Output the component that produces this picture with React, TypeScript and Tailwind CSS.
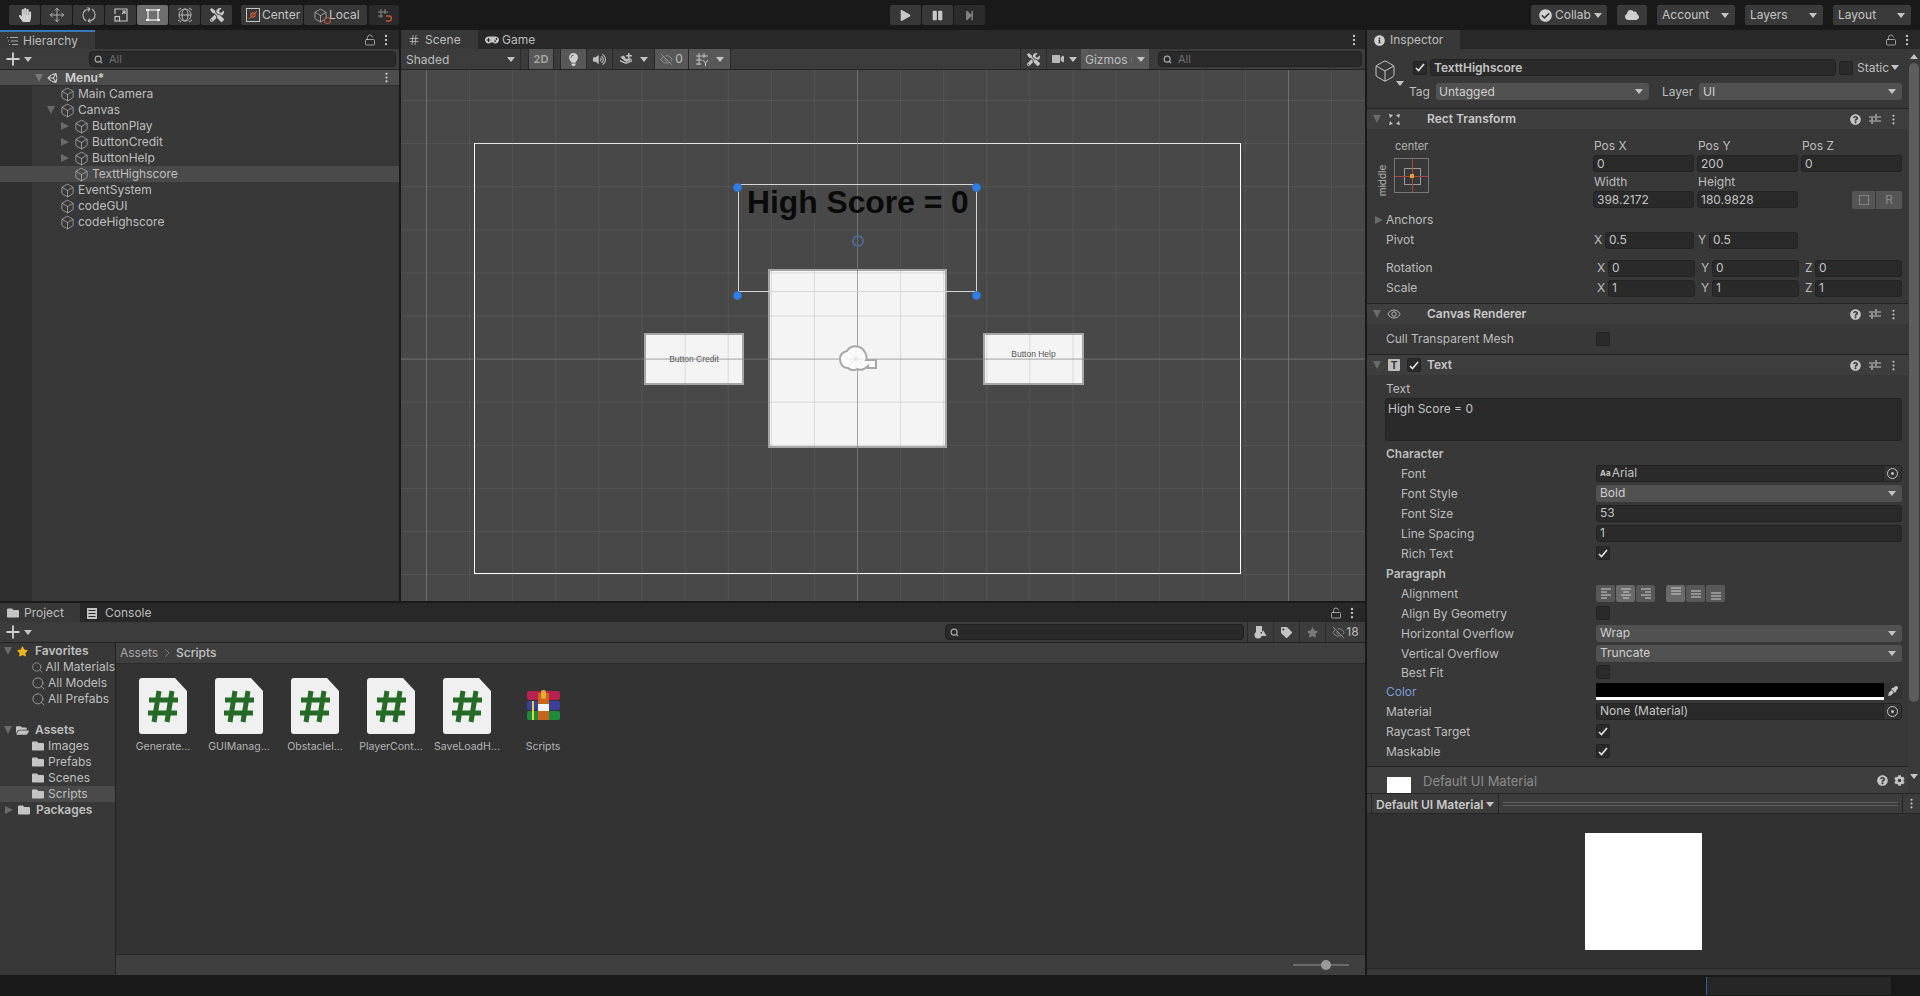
import type { ReactNode } from "react";
import { Box, EyeOff, Hash, LockOpen, Move, Search, EllipsisVertical, Plus } from "lucide-react";
import {
  FaCheckCircle,
  FaCloud,
  FaCog,
  FaEyeDropper,
  FaFolder,
  FaFolderOpen,
  FaGamepad,
  FaHandPaper,
  FaInfoCircle,
  FaLightbulb,
  FaPause,
  FaPlay,
  FaQuestionCircle,
  FaStar,
  FaStepForward,
  FaTag,
  FaTools,
  FaUnity,
  FaVideo,
  FaVolumeUp,
} from "react-icons/fa";

const Caret = ({ className = "" }: { className?: string }) => (
  <span className={`inline-block h-0 w-0 border-x-[4px] border-t-[5px] border-x-transparent border-t-[#c4c4c4] ${className}`} />
);

const FoldDown = ({ className = "" }: { className?: string }) => (
  <span className={`inline-block h-0 w-0 border-x-[4px] border-t-[8px] border-x-transparent border-t-[#6a6a6a] ${className}`} />
);

const FoldRight = ({ className = "" }: { className?: string }) => (
  <span className={`inline-block h-0 w-0 border-y-[4px] border-l-[8px] border-y-transparent border-l-[#6a6a6a] ${className}`} />
);

const Sliders = () => (
  <svg width="12" height="12" viewBox="0 0 12 12" stroke="#c4c4c4" strokeWidth="1.2" fill="none">
    <path d="M0 4h6M8 4h4M7 1v6M0 8h2M4 8h8M3 5v6" />
  </svg>
);

const ToolButton = ({ children, active, className = "" }: { children: ReactNode; active?: boolean; className?: string }) => (
  <div className={`flex h-5 w-[31px] items-center justify-center rounded-[2px] ${active ? "bg-[#6e6e6e]" : "bg-[#383838]"} ${className}`}>
    {children}
  </div>
);

const TopDropdown = ({ label, width }: { label: string; width: string }) => (
  <div className={`flex h-5 items-center justify-between rounded-[2px] bg-[#3a3a3a] pl-[5px] pr-[6px] text-[#c4c4c4] ${width}`}>
    <span>{label}</span>
    <Caret />
  </div>
);

const TopBar = () => (
  <div className="flex h-[30px] items-center bg-[#191919] text-[12px]">
    <div className="flex w-[890px] items-center pl-[9px]">
      <div className="flex gap-px">
        <ToolButton><FaHandPaper size={14} color="#d0d0d0" /></ToolButton>
        <ToolButton><Move size={16} color="#b8b8b8" strokeWidth={1.4} /></ToolButton>
        <ToolButton>
          <svg width="16" height="16" viewBox="0 0 16 16" fill="none" stroke="#b8b8b8" strokeWidth="1.1">
            <path d="M5 14C1 11 1 6 4 3.5 5.5 2.3 7 2 9 2M9 2L6.5.5M9 2L7 4.5" />
            <path d="M11 2c4 3 4 8 1 10.500C10.500 13.700 9 14 7 14M7 14l2.500 1.500M7 14l2-2.500" />
          </svg>
        </ToolButton>
        <ToolButton>
          <svg width="14" height="14" viewBox="0 0 14 14" fill="none" stroke="#c4c4c4" strokeWidth="1.2">
            <path d="M1 6V1h12v12H6M8 6l3-3M8 3h3v3" />
            <rect x="1" y="8.5" width="4.5" height="4.5" />
          </svg>
        </ToolButton>
        <ToolButton active>
          <svg width="14" height="14" viewBox="0 0 14 14" fill="none" stroke="#f0f0f0" strokeWidth="1.2">
            <rect x="2" y="2" width="10" height="10" />
            <path d="M0 2h3M11 2h3M0 12h3M11 12h3" strokeWidth="2" />
          </svg>
        </ToolButton>
        <ToolButton>
          <svg width="16" height="16" viewBox="0 0 16 16" fill="none" stroke="#b8b8b8" strokeWidth="1">
            <circle cx="8" cy="8" r="6" />
            <ellipse cx="8" cy="8" rx="3" ry="6" />
            <path d="M2 8h12M1 3l3-2M12 1l3 2M1 13l3 2M12 15l3-2" />
          </svg>
        </ToolButton>
        <ToolButton><FaTools size={14} color="#c8c8c8" /></ToolButton>
      </div>
      <div className="ml-[9px] flex h-5 w-[62px] items-center gap-[2px] rounded-[2px] bg-[#383838] pl-[5px] text-[#c4c4c4]">
        <svg width="14" height="14" viewBox="0 0 14 14" fill="none">
          <rect x="0.5" y="0.5" width="13" height="13" stroke="#c4c4c4" />
          <circle cx="7" cy="7" r="2.2" stroke="#d8593c" strokeWidth="1.2" />
          <path d="M3 11l8-8" stroke="#d8593c" />
        </svg>
        <span>Center</span>
      </div>
      <div className="ml-px flex h-5 w-[63px] items-center rounded-[2px] bg-[#383838] pl-[9px] text-[#c4c4c4]">
        <span className="relative">
          <Box size={15} color="#b8b8b8" strokeWidth={1.2} />
          <span className="absolute bottom-[-1px] right-[-3px] size-[7px] rounded-full border border-[#d8593c]" />
        </span>
        <span className="ml-[1px]">Local</span>
      </div>
      <div className="ml-[2px] flex h-5 w-[30px] items-center justify-center rounded-[2px] bg-[#2b2b2b]">
        <svg width="15" height="15" viewBox="0 0 15 15" fill="none" stroke="#8a8a8a" strokeWidth="1">
          <path d="M4 1v9M8 1v5M1 4h10M1 8h5" />
          <path d="M9 8h3a2 2 0 0 1 0 5H9" stroke="#c4583a" strokeWidth="1.4" />
        </svg>
      </div>
    </div>
    <div className="flex gap-px">
      <ToolButton className="bg-[#3a3a3a]"><FaPlay size={11} color="#c8c8c8" /></ToolButton>
      <ToolButton className="bg-[#3a3a3a]"><FaPause size={11} color="#c8c8c8" /></ToolButton>
      <ToolButton className="!bg-[#2b2b2b]"><FaStepForward size={11} color="#808080" /></ToolButton>
    </div>
    <div className="flex flex-1 items-center justify-end gap-[10px] pr-[9px]">
      <div className="flex h-5 w-[76px] items-center gap-[3px] rounded-[2px] bg-[#3a3a3a] pl-2 text-[#c4c4c4]">
        <FaCheckCircle size={13} color="#d0d0d0" />
        <span>Collab</span>
        <Caret />
      </div>
      <div className="flex h-5 w-[30px] items-center justify-center rounded-[2px] bg-[#3a3a3a]">
        <FaCloud size={14} color="#d0d0d0" />
      </div>
      <TopDropdown label="Account" width="w-[78px]" />
      <TopDropdown label="Layers" width="w-[78px]" />
      <TopDropdown label="Layout" width="w-[78px]" />
    </div>
  </div>
);

const TabStrip = ({ children, right = true }: { children: ReactNode; right?: boolean }) => (
  <div className="flex h-[19px] shrink-0 bg-[#282828] text-[12px] text-[#bdbdbd]">
    {children}
    {right && (
      <div className="ml-auto flex items-center gap-[1px] pr-[6px]">
        <LockOpen size={12} color="#c4c4c4" strokeWidth={1.5} />
        <EllipsisVertical size={14} color="#c4c4c4" strokeWidth={2} className="ml-[2px]" />
      </div>
    )}
  </div>
);

const Tab = ({ children, active, accent, width, gap = "gap-[5px]" }: { children: ReactNode; active?: boolean; accent?: boolean; width: string; gap?: string }) => (
  <div
    className={`flex items-center pl-[7px] ${gap} ${width} ${active ? "bg-[#383838]" : ""} ${accent ? "border-t-2 border-[#3a79bb]" : "pt-px"}`}
  >
    {children}
  </div>
);

const SearchField = ({ width, hint = "All" }: { width: string; hint?: string }) => (
  <div className={`flex h-4 items-center gap-[3px] rounded-[4px] border border-[#222] bg-[#2a2a2a] pl-[4px] text-[11px] text-[#6f6f6f] ${width}`}>
    <Search size={9} color="#a8a8a8" strokeWidth={3} />
    <span className="ml-[3px]">{hint}</span>
  </div>
);

const treeRows = [
  { name: "Main Camera", level: 1 },
  { name: "Canvas", level: 1, fold: "down" },
  { name: "ButtonPlay", level: 2, fold: "right" },
  { name: "ButtonCredit", level: 2, fold: "right" },
  { name: "ButtonHelp", level: 2, fold: "right" },
  { name: "TexttHighscore", level: 2, selected: true },
  { name: "EventSystem", level: 1 },
  { name: "codeGUI", level: 1 },
  { name: "codeHighscore", level: 1 },
];

const Hierarchy = () => (
  <div className="flex w-[399px] shrink-0 flex-col bg-[#383838]">
    <TabStrip>
      <Tab active accent width="w-[95px]">
        <svg width="11" height="10" viewBox="0 0 11 10" stroke="#a8a8a8" fill="none">
          <path d="M0 1.5h1M3 1.5h8M1 5h1M4 5h7M2 8.5h1M5 8.5h6" />
        </svg>
        <span>Hierarchy</span>
      </Tab>
    </TabStrip>
    <div className="flex h-[21px] shrink-0 items-center border-b border-[#232323] bg-[#3c3c3c] pl-[3px]">
      <Plus size={20} color="#d0d0d0" strokeWidth={2.2} />
      <Caret className="ml-[1px]" />
      <div className="ml-[57px]"><SearchField width="w-[307px]" /></div>
    </div>
    <div className="flex h-[16px] shrink-0 items-center border-b border-[#2e2e2e] bg-[#4d4d4d] text-[12px] font-semibold text-[#d0d0d0]">
      <FoldDown className="ml-[35px] border-t-[#777]" />
      <FaUnity size={12} color="#d0d0d0" className="ml-[4px]" />
      <span className="ml-[6px]">Menu*</span>
      <EllipsisVertical size={13} color="#d0d0d0" strokeWidth={2} className="ml-auto mr-[6px]" />
    </div>
    <div className="flex-1 bg-[linear-gradient(to_right,#2f2f2f_32px,#383838_32px)] text-[12px] text-[#bfbfbf]">
      {treeRows.map((row) => (
        <div key={row.name} className={`flex h-4 items-center ${row.selected ? "bg-[#4a4a4a]" : ""}`}>
          <div className={`flex items-center justify-end ${row.level === 1 ? "w-[60px]" : "w-[74px]"}`}>
            {row.fold === "down" && <FoldDown className="mr-[5px]" />}
            {row.fold === "right" && <FoldRight className="mr-[5px]" />}
          </div>
          <Box size={15} color="#bdbdbd" strokeWidth={1.1} />
          <span className="ml-[3px]">{row.name}</span>
        </div>
      ))}
    </div>
  </div>
);

const SceneButton = ({ children, width, active }: { children: ReactNode; width: string; active?: boolean }) => (
  <div className={`flex h-full items-center justify-center border-r border-[#2a2a2a] ${width} ${active ? "bg-[#585858]" : ""}`}>
    {children}
  </div>
);

// drawn over the white panels too, the lines are see-through like in the editor
const SceneGrid = () => {
  const xs = Array.from({ length: 23 }, (_, i) => 25.5 + i * 43.1);
  const ys = Array.from({ length: 13 }, (_, i) => 30.5 + i * 43.1);
  return (
    <svg className="absolute inset-0" width="964" height="531">
      {xs.map((x, i) => (
        <line key={x} x1={x} y1="0" x2={x} y2="531" stroke="#808080" strokeOpacity={i % 10 === 0 ? 0.7 : 0.22} />
      ))}
      {ys.map((y, i) => (
        <line key={y} x1="0" y1={y} x2="964" y2={y} stroke="#808080" strokeOpacity={i === 6 ? 0.7 : 0.22} />
      ))}
    </svg>
  );
};

const Handle = ({ className }: { className: string }) => (
  <div className={`absolute size-[9px] rounded-full border border-[#3b6fb0] bg-[#2a80ee] ${className}`} />
);

const Scene = () => (
  <div className="flex w-[964px] shrink-0 flex-col bg-[#383838]">
    <TabStrip right={false}>
      <Tab active width="w-[77px]">
        <Hash size={12} color="#c4c4c4" strokeWidth={1.6} />
        <span>Scene</span>
      </Tab>
      <Tab width="w-[80px]">
        <FaGamepad size={14} color="#c4c4c4" />
        <span className="-ml-[2px]">Game</span>
      </Tab>
      <div className="ml-auto flex items-center pr-[4px]">
        <EllipsisVertical size={14} color="#c4c4c4" strokeWidth={2} />
      </div>
    </TabStrip>
    <div className="flex h-[21px] shrink-0 items-center border-b border-[#232323] bg-[#3c3c3c] text-[12px] text-[#bdbdbd]">
      <div className="flex h-full w-[120px] items-center justify-between border-r border-[#2a2a2a] pl-[5px] pr-[5px] pt-px">
        <span>Shaded</span>
        <Caret />
      </div>
      <div className="ml-[7px] flex h-full border-l border-[#2a2a2a]">
        <SceneButton width="w-[25px]" active><span className="text-[11px] font-semibold text-[#a8a8a8]">2D</span></SceneButton>
      </div>
      <div className="ml-[6px] flex h-full border-l border-[#2a2a2a]">
        <SceneButton width="w-[26px]" active><FaLightbulb size={13} color="#cfcfcf" /></SceneButton>
        <SceneButton width="w-[26px]"><FaVolumeUp size={13} color="#bdbdbd" /></SceneButton>
        <SceneButton width="w-[42px]">
          <svg width="14" height="13" viewBox="0 0 14 13" fill="#bdbdbd">
            <path d="M1 7l6 2.5L13 7v1.5L7 11 1 8.5zM1 4l4-1.5L7 6l4-1 2 1.5-6 2.5zM9 0h1.5v2H13v1.5h-2.5V5H9V3.5H7V2h2z" />
          </svg>
          <Caret className="ml-[7px]" />
        </SceneButton>
        <SceneButton width="w-[34px]" active>
          <EyeOff size={13} color="#a0a0a0" strokeWidth={1.4} />
          <span className="ml-[2px]">0</span>
        </SceneButton>
        <SceneButton width="w-[42px]" active>
          <svg width="13" height="14" viewBox="0 0 13 14" stroke="#c4c4c4" fill="none">
            <path d="M3 1v12M8 1v5M0 4h12M0 8h6M0 12h5M7 8l2.5 3L12 8M9.5 11v3" />
          </svg>
          <Caret className="ml-[7px]" />
        </SceneButton>
      </div>
      <div className="ml-auto flex h-full items-center border-l border-[#2a2a2a]">
        <SceneButton width="w-[26px]"><FaTools size={13} color="#c4c4c4" /></SceneButton>
        <div className="flex h-full w-[34px] items-center justify-center gap-[5px]">
          <FaVideo size={12} color="#b8b8b8" />
          <Caret />
        </div>
        <div className="flex h-full w-[68px] items-center justify-between bg-[#585858] px-[4px] pt-px">
          <span>Gizmos</span>
          <span className="flex items-center gap-[5px] border-l border-[#6a6a6a] pl-[5px]"><Caret /></span>
        </div>
        <div className="ml-[9px] mr-[3px]"><SearchField width="w-[204px]" /></div>
      </div>
    </div>
    <div className="relative flex-1 overflow-hidden bg-[#484848]">
      <div className="absolute left-[73px] top-[73px] h-[431px] w-[767px] border border-white" />
      <div className="absolute left-[367px] top-[199px] h-[179px] w-[179px] border-2 border-[#a6a6a6] bg-[#f4f4f4]" />
      <div className="absolute left-[243px] top-[263px] flex h-[52px] w-[100px] items-center justify-center border-2 border-[#a6a6a6] bg-[#f4f4f4] text-[8.5px] text-[#555]">
        <span className="font-['Liberation_Sans',sans-serif]">Button Credit</span>
      </div>
      <div className="absolute left-[582px] top-[263px] flex h-[52px] w-[101px] items-start justify-center border-2 border-[#a6a6a6] bg-[#f4f4f4] pt-[13px] text-[8.5px] text-[#555]">
        <span className="font-['Liberation_Sans',sans-serif]">Button Help</span>
      </div>
      <SceneGrid />
      <div className="absolute left-[337px] top-[114px] h-[108px] w-[239px] border border-[#d6d6d6]" />
      <div className="absolute left-[346px] top-[113px] whitespace-nowrap font-['Liberation_Sans',sans-serif] text-[31.8px] font-bold leading-[38px] text-[#0a0a0a]">
        High Score = 0
      </div>
      <div className="absolute left-[451px] top-[165px] size-[12px] rounded-full border-2 border-[#4c6a96]" />
      <Handle className="left-[332px] top-[113px]" />
      <Handle className="left-[571px] top-[113px]" />
      <Handle className="left-[332px] top-[221px]" />
      <Handle className="left-[571px] top-[221px]" />
      <svg className="absolute left-[438px] top-[275px]" width="38" height="27" viewBox="0 0 38 27">
        <path
          d="M1 14c0-4 3-7 7-8 2-4 7-6 12-4 3 1 6 4 7 8 1 2 1 3 0 5h10v8h-8v-2c-3 3-7 5-11 3-3 2-7 1-9-1-5 0-8-4-8-9z"
          fill="#ffffff"
          stroke="#a8a8a8"
          strokeWidth="2"
        />
        <path d="M17 4v20M7 14h20M10 7l14 14M24 7L10 21" stroke="#dcdcdc" strokeWidth="0.7" />
      </svg>
    </div>
  </div>
);

const ScriptIcon = () => (
  <svg width="48" height="56" viewBox="0 0 48 56">
    <path d="M3 0h33l12 13v40a3 3 0 0 1-3 3H3a3 3 0 0 1-3-3V3a3 3 0 0 1 3-3z" fill="#f0f0f0" />
    <path d="M20 13l-5 31M33 13l-5 31M10 22h29M9 35h29" stroke="#256a26" strokeWidth="5" fill="none" />
  </svg>
);

const ArchiveIcon = () => (
  <svg width="33" height="30" viewBox="0 0 33 30">
    <rect y="1" width="33" height="9" rx="2" fill="#b6214f" />
    <rect y="11" width="33" height="9" rx="2" fill="#3a3f9e" />
    <rect y="21" width="33" height="9" rx="2" fill="#1f8a3c" />
    <rect x="11" y="3" width="11" height="27" fill="#c8651b" />
    <rect x="11" y="14" width="11" height="7" fill="#f2f2f2" />
    <rect x="14" y="0" width="5" height="9" rx="2" fill="#e8a832" />
    <rect x="5" y="11" width="2" height="19" fill="#e4d23a" />
  </svg>
);

const files = ["Generate...", "GUIManag...", "Obstaclel...", "PlayerCont...", "SaveLoadH..."];

const SideRow = ({ children, selected, className = "" }: { children: ReactNode; selected?: boolean; className?: string }) => (
  <div className={`flex h-4 items-center whitespace-nowrap ${selected ? "bg-[#4a4a4a]" : ""} ${className}`}>{children}</div>
);

const Project = () => (
  <div className="flex h-[372px] flex-col bg-[#383838]">
    <TabStrip>
      <Tab active width="w-[80px]">
        <FaFolder size={12} color="#c4c4c4" />
        <span>Project</span>
      </Tab>
      <Tab width="w-[80px]" gap="gap-[8px]">
        <svg width="10" height="11" viewBox="0 0 10 11" fill="#c4c4c4">
          <path d="M0 0h10v11H0zM1.5 2v1h7V2zm0 3v1h7V5zm0 3v1h7V8z" fillRule="evenodd" />
        </svg>
        <span>Console</span>
      </Tab>
    </TabStrip>
    <div className="flex h-[21px] shrink-0 items-center border-b border-[#232323] bg-[#3c3c3c] pl-[3px] text-[12px] text-[#bdbdbd]">
      <Plus size={20} color="#d0d0d0" strokeWidth={2.2} />
      <Caret className="ml-[1px]" />
      <div className="ml-auto flex h-full items-center">
        <div className="mr-[3px]"><SearchField width="w-[299px]" hint="" /></div>
        <div className="flex h-full w-[26px] items-center justify-center border-l border-[#2a2a2a]">
          <svg width="13" height="13" viewBox="0 0 13 13" fill="#c4c4c4">
            <rect x="2" y="0" width="6" height="6" />
            <circle cx="4" cy="9" r="3.5" />
            <path d="M9 4l3.5 6H6.5z" />
          </svg>
        </div>
        <div className="flex h-full w-[26px] items-center justify-center border-l border-[#2a2a2a]"><FaTag size={11} color="#c4c4c4" /></div>
        <div className="flex h-full w-[26px] items-center justify-center border-l border-[#2a2a2a]"><FaStar size={11} color="#7a7a7a" /></div>
        <div className="flex h-full w-[40px] items-center justify-center border-l border-[#2a2a2a]">
          <EyeOff size={13} color="#a0a0a0" strokeWidth={1.4} />
          <span className="ml-[1px]">18</span>
        </div>
      </div>
    </div>
    <div className="flex flex-1 overflow-hidden">
      <div className="w-[116px] shrink-0 overflow-hidden border-r border-[#232323] text-[12px] text-[#bfbfbf]">
        <SideRow className="font-semibold">
          <FoldDown className="ml-[4px]" />
          <FaStar size={11} color="#efb51e" className="ml-[5px]" />
          <span className="ml-[7px]">Favorites</span>
        </SideRow>
        {["All Materials", "All Models", "All Prefabs"].map((name) => (
          <SideRow key={name}>
            <Search size={15} color="#bdbdbd" strokeWidth={1.1} className="ml-[31px]" />
            <span className="ml-[2px]">{name}</span>
          </SideRow>
        ))}
        <div className="h-[15px]" />
        <SideRow className="font-semibold">
          <FoldDown className="ml-[4px]" />
          <FaFolderOpen size={13} color="#c4c4c4" className="ml-[4px]" />
          <span className="ml-[6px]">Assets</span>
        </SideRow>
        {["Images", "Prefabs", "Scenes", "Scripts"].map((name) => (
          <SideRow key={name} selected={name === "Scripts"}>
            <FaFolder size={12} color="#c4c4c4" className="ml-[32px]" />
            <span className="ml-[4px]">{name}</span>
          </SideRow>
        ))}
        <SideRow className="font-semibold">
          <FoldRight className="ml-[5px]" />
          <FaFolder size={12} color="#c4c4c4" className="ml-[5px]" />
          <span className="ml-[6px]">Packages</span>
        </SideRow>
      </div>
      <div className="flex flex-1 flex-col">
        <div className="flex h-[21px] shrink-0 items-center border-b border-[#2b2b2b] bg-[#3f3f3f] pl-[4px] text-[12px] text-[#a8a8a8]">
          <span>Assets</span>
          <svg width="6" height="10" viewBox="0 0 6 10" fill="none" stroke="#777" className="mx-[6px]">
            <path d="M1 1l4 4-4 4" />
          </svg>
          <span className="font-medium text-[#c4c4c4]">Scripts</span>
        </div>
        <div className="flex flex-1 gap-[28px] bg-[#333333] pl-[23px] pt-[14px] text-[10.5px] text-[#b4b4b4]">
          {files.map((name) => (
            <div key={name} className="flex w-[48px] flex-col items-center gap-[5px]">
              <ScriptIcon />
              <span className="whitespace-nowrap">{name}</span>
            </div>
          ))}
          <div className="flex w-[48px] flex-col items-center">
            <div className="flex h-[56px] items-end pb-[14px]"><ArchiveIcon /></div>
            <span className="mt-[5px]">Scripts</span>
          </div>
        </div>
        <div className="flex h-[21px] shrink-0 items-center justify-end border-t border-[#2b2b2b] bg-[#3f3f3f] pr-[16px]">
          <div className="relative h-[2px] w-[56px] bg-[#6a6a6a]">
            <div className="absolute left-[28px] top-[-4px] size-[10px] rounded-full bg-[#9a9a9a]" />
          </div>
        </div>
      </div>
    </div>
  </div>
);

const FieldBox = ({ children, className = "" }: { children?: ReactNode; className?: string }) => (
  <div className={`flex h-[17px] items-center rounded-[3px] border border-[#232323] bg-[#2a2a2a] px-[3px] text-[#c4c4c4] ${className}`}>
    {children}
  </div>
);

const Check = ({ checked }: { checked?: boolean }) => (
  <div className="flex size-[14px] items-center justify-center rounded-[2px] border border-[#232323] bg-[#2a2a2a]">
    {checked && (
      <svg width="10" height="9" viewBox="0 0 10 9" fill="none" stroke="#e4e4e4" strokeWidth="1.6">
        <path d="M1 5l2.5 2.5L9 1" />
      </svg>
    )}
  </div>
);

const Dropdown = ({ label, className = "" }: { label: string; className?: string }) => (
  <div className={`flex h-[17px] items-center justify-between rounded-[3px] bg-[#515151] pl-[4px] pr-[6px] text-[#d0d0d0] ${className}`}>
    <span>{label}</span>
    <Caret />
  </div>
);

const Row = ({ label, indent, children, className = "h-5", labelClass = "pt-[2px]" }: { label: string; indent?: boolean; children?: ReactNode; className?: string; labelClass?: string }) => (
  <div className={`flex items-center pr-[6px] ${className}`}>
    <div className={`w-[229px] shrink-0 ${indent ? "pl-[34px]" : "pl-[19px]"} ${labelClass}`}>{label}</div>
    <div className="min-w-0 flex-1">{children}</div>
  </div>
);

const CompHeader = ({ icon, title, check }: { icon: ReactNode; title: string; check?: boolean }) => (
  <div className="flex h-[21px] shrink-0 items-center border-t border-[#232323] bg-[#3e3e3e] text-[12px] font-semibold text-[#c8c8c8]">
    <FoldDown className="ml-[6px]" />
    <div className="ml-[6px] flex w-[14px] justify-center">{icon}</div>
    {check && <div className="ml-[6px]"><Check checked /></div>}
    <span className={check ? "ml-[6px]" : "ml-[26px]"}>{title}</span>
    <div className="ml-auto flex items-center gap-[8px] pr-[11px]">
      <FaQuestionCircle size={11} color="#c4c4c4" />
      <Sliders />
      <EllipsisVertical size={13} color="#c4c4c4" strokeWidth={2} className="-ml-[2px] -mr-[3px]" />
    </div>
  </div>
);

const AxisField = ({ axis, value, width, pad, labelWidth = "w-[11px]" }: { axis: string; value: string; width: string; pad: string; labelWidth?: string }) => (
  <div className={`flex items-center ${width} ${pad}`}>
    <span className={`shrink-0 text-[#bdbdbd] ${labelWidth}`}>{axis}</span>
    <FieldBox className="min-w-0 flex-1">{value}</FieldBox>
  </div>
);

const TargetDot = () => (
  <div className="flex h-full w-[18px] items-center justify-center border-l border-[#232323] bg-[#333]">
    <div className="flex size-[11px] items-center justify-center rounded-full border border-[#c4c4c4]">
      <div className="size-[3px] rounded-full bg-[#c4c4c4]" />
    </div>
  </div>
);

const AlignIcon = ({ kind }: { kind: string }) => {
  const paths: Record<string, string> = {
    left: "M1 2h10M1 5h6M1 8h10M1 11h6",
    center: "M1 2h10M3 5h6M1 8h10M3 11h6",
    right: "M1 2h10M5 5h6M1 8h10M5 11h6",
    top: "M1 1h10M1 4h10M1 7h10",
    middle: "M1 4h10M1 7h10M1 10h10",
    bottom: "M1 6h10M1 9h10M1 12h10",
  };
  return (
    <svg width="12" height="13" viewBox="0 0 12 13" stroke="#cfcfcf" fill="none">
      <path d={paths[kind]} />
    </svg>
  );
};

const AlignGroup = ({ kinds, active }: { kinds: string[]; active: string }) => (
  <div className="flex gap-px">
    {kinds.map((kind) => (
      <div key={kind} className={`flex h-[17px] w-[19px] items-center justify-center rounded-[2px] ${kind === active ? "bg-[#6a6a6a]" : "bg-[#585858]"}`}>
        <AlignIcon kind={kind} />
      </div>
    ))}
  </div>
);

const Inspector = () => (
  <div className="flex w-[553px] shrink-0 flex-col bg-[#383838] text-[12px] text-[#bdbdbd]">
    <TabStrip>
      <Tab active width="w-[93px]">
        <FaInfoCircle size={11} color="#d0d0d0" />
        <span>Inspector</span>
      </Tab>
    </TabStrip>
    <div className="flex h-[744px] shrink-0">
      <div className="min-w-0 flex-1">
        <div className="flex h-[59px]">
          <div className="relative w-[42px] shrink-0 pl-[6px] pt-[10px]">
            <Box size={24} color="#c4c4c4" strokeWidth={1} />
            <Caret className="absolute left-[29px] top-[32px]" />
          </div>
          <div className="flex-1 pr-[6px] pt-[10px]">
            <div className="flex h-[17px] items-center">
              <div className="ml-[4px]"><Check checked /></div>
              <FieldBox className="ml-[3px] w-[406px] font-semibold">TexttHighscore</FieldBox>
              <div className="ml-[3px]"><Check /></div>
              <span className="ml-[4px]">Static</span>
              <Caret className="ml-[2px]" />
            </div>
            <div className="mt-[7px] flex h-[17px] items-center">
              <span className="w-[27px] shrink-0">Tag</span>
              <Dropdown label="Untagged" className="w-[213px] !pl-[3px]" />
              <span className="ml-[13px] w-[37px] shrink-0">Layer</span>
              <Dropdown label="UI" className="flex-1" />
            </div>
          </div>
        </div>

        <CompHeader
          title="Rect Transform"
          icon={
            <svg width="13" height="13" viewBox="0 0 13 13" fill="#c4c4c4">
              <path d="M1 1l4 1-3 3zM12 1l-1 4-3-3zM1 12l1-4 3 3zM12 12l-4-1 3-3z" />
            </svg>
          }
        />
        <div className="h-[174px] pt-[8px]">
          <div className="flex">
            <div className="relative flex w-[226px] shrink-0 flex-col pl-[27px]">
              <span className="h-[21px] pl-px text-[11px] leading-[18px] text-[#b4b4b4]">center</span>
              <div className="relative h-[35px] w-[35px] border border-[#777]">
                <div className="absolute left-[9px] top-[9px] h-[17px] w-[17px] border border-[#999]" />
                <div className="absolute left-0 top-[17px] h-px w-full bg-[#a6463c]" />
                <div className="absolute left-[17px] top-0 h-full w-px bg-[#a6463c]" />
                <div className="absolute left-[15px] top-[15px] size-[4px] bg-[#e0a030]" />
              </div>
              <span className="absolute left-0 top-[36px] origin-center -rotate-90 text-[10px] text-[#b4b4b4]">middle</span>
            </div>
            <div className="grid w-[309px] grid-cols-3 gap-x-[3px]">
              {["Pos X", "Pos Y", "Pos Z"].map((label) => (
                <span key={label} className="h-[18px] pl-[1px] leading-[18px]">{label}</span>
              ))}
              <FieldBox>0</FieldBox>
              <FieldBox>200</FieldBox>
              <FieldBox>0</FieldBox>
              <span className="mt-px h-[18px] pl-[1px] leading-[18px]">Width</span>
              <span className="mt-px h-[18px] pl-[1px] leading-[18px]">Height</span>
              <span className="mt-px h-[18px]" />
              <FieldBox>398.2172</FieldBox>
              <FieldBox>180.9828</FieldBox>
              <div className="flex justify-end gap-px">
                <div className="flex h-[18px] w-[23px] items-center justify-center rounded-l-[2px] bg-[#555]">
                  <div className="size-[10px] border border-dashed border-[#8a8a8a]" />
                </div>
                <div className="flex h-[18px] w-[26px] items-center justify-center rounded-r-[2px] bg-[#555] text-[#8a8a8a]">R</div>
              </div>
            </div>
          </div>
          <div className="mt-px flex h-5 items-center pl-[8px]">
            <FoldRight className="mr-[3px]" />
            <span>Anchors</span>
          </div>
          <Row label="Pivot" labelClass="">
            <div className="-ml-[3px] flex">
              <AxisField axis="X" value="0.5" width="w-[101px]" pad="pl-px" />
              <AxisField axis="Y" value="0.5" width="w-[104px]" pad="pl-[4px]" />
            </div>
          </Row>
          <div className="h-2" />
          <Row label="Rotation" labelClass="">
            <div className="flex">
              <AxisField axis="X" value="0" width="w-[99px]" pad="pl-px" />
              <AxisField axis="Y" value="0" width="w-[104px]" pad="pl-[6px]" />
              <AxisField axis="Z" value="0" width="w-[103px]" pad="pl-[6px]" labelWidth="w-[10px]" />
            </div>
          </Row>
          <Row label="Scale" labelClass="">
            <div className="flex">
              <AxisField axis="X" value="1" width="w-[99px]" pad="pl-px" />
              <AxisField axis="Y" value="1" width="w-[104px]" pad="pl-[6px]" />
              <AxisField axis="Z" value="1" width="w-[103px]" pad="pl-[6px]" labelWidth="w-[10px]" />
            </div>
          </Row>
        </div>

        <CompHeader
          title="Canvas Renderer"
          icon={
            <svg width="16" height="12" viewBox="0 0 16 12" fill="none" stroke="#c4c4c4">
              <path d="M1 6c3-6 11-6 14 0-3 6-11 6-14 0z" />
              <circle cx="8" cy="6" r="2.5" />
            </svg>
          }
        />
        <div className="flex h-[30px] items-center">
          <Row label="Cull Transparent Mesh" labelClass=""><Check /></Row>
        </div>

        <CompHeader
          title="Text"
          check
          icon={
            <div className="flex size-[12px] items-center justify-center rounded-[1px] bg-[#bdbdbd] text-[10px] font-bold leading-none text-[#333]">T</div>
          }
        />
        <div className="h-[391px]">
          <div className="flex h-[23px] items-end pl-[19px]">Text</div>
          <div className="ml-[18px] mr-[6px] h-[43px] rounded-[3px] border border-[#232323] bg-[#2a2a2a] px-[2px] pt-[1px] text-[#c4c4c4]">
            High Score = 0
          </div>
          <div className="flex h-[22px] items-end pl-[19px] font-semibold">Character</div>
          <Row label="Font" indent>
            <FieldBox className="!px-0 pl-[3px]">
              <span className="ml-[3px] text-[8px] font-bold">Aa</span>
              <span className="ml-[1px]">Arial</span>
              <div className="ml-auto h-full"><TargetDot /></div>
            </FieldBox>
          </Row>
          <Row label="Font Style" indent><Dropdown label="Bold" /></Row>
          <Row label="Font Size" indent><FieldBox>53</FieldBox></Row>
          <Row label="Line Spacing" indent><FieldBox>1</FieldBox></Row>
          <Row label="Rich Text" indent><Check checked /></Row>
          <div className="flex h-5 items-center pl-[19px] pt-[2px] font-semibold">Paragraph</div>
          <Row label="Alignment" indent>
            <div className="flex gap-[11px]">
              <AlignGroup kinds={["left", "center", "right"]} active="center" />
              <AlignGroup kinds={["top", "middle", "bottom"]} active="top" />
            </div>
          </Row>
          <Row label="Align By Geometry" indent><Check /></Row>
          <Row label="Horizontal Overflow" indent><Dropdown label="Wrap" /></Row>
          <Row label="Vertical Overflow" indent><Dropdown label="Truncate" /></Row>
          <Row label="Best Fit" indent className="h-[18px]"><Check /></Row>
          <Row label="Color" labelClass="pt-[2px] text-[#7b9cd6]">
            <div className="flex h-[17px]">
              <div className="flex flex-1 flex-col">
                <div className="flex-1 bg-black" />
                <div className="h-[3px] bg-white" />
              </div>
              <div className="flex w-[18px] items-center justify-center rounded-r-[3px] bg-[#333]">
                <FaEyeDropper size={10} color="#c4c4c4" />
              </div>
            </div>
          </Row>
          <Row label="Material">
            <FieldBox className="!px-0">
              <span className="ml-[3px]">None (Material)</span>
              <div className="ml-auto h-full"><TargetDot /></div>
            </FieldBox>
          </Row>
          <Row label="Raycast Target"><Check checked /></Row>
          <Row label="Maskable"><Check checked /></Row>
        </div>

        <div className="flex h-[27px] items-end border-t border-[#232323] bg-[#3e3e3e]">
          <div className="ml-[20px] h-4 w-6 bg-white" />
          <span className="ml-[12px] self-center pt-[3px] text-[13px] text-[#8c8c8c]">Default UI Material</span>
          <div className="ml-auto mr-[3px] flex items-center gap-[6px] self-center">
            <FaQuestionCircle size={11} color="#c4c4c4" />
            <FaCog size={11} color="#c4c4c4" />
          </div>
        </div>
      </div>
      <div className="flex w-3 shrink-0 flex-col items-center bg-[#3a3a3a] pt-[5px]">
        <span className="h-0 w-0 border-x-[4px] border-b-[5px] border-x-transparent border-b-[#c4c4c4]" />
        <div className="mt-[4px] h-[639px] w-[10px] rounded-full bg-[#5d5d5d]" />
        <Caret className="mt-[72px]" />
      </div>
    </div>
    <div className="flex h-[21px] shrink-0 items-center border-y border-[#262626] bg-[#3c3c3c]">
      <div className="ml-[4px] flex h-full w-[128px] items-center border-x border-[#262626] pl-[4px] pt-[2px] font-semibold text-[#c8c8c8]">
        <span>Default UI Material</span>
        <Caret className="ml-[3px]" />
      </div>
      <div className="mx-[4px] flex h-[4px] flex-1 flex-col justify-between border-y border-[#5f5f5f]" />
      <div className="flex h-full w-[18px] items-center justify-center border-l border-[#262626]">
        <EllipsisVertical size={13} color="#c4c4c4" strokeWidth={2} />
      </div>
    </div>
    <div className="flex h-[155px] shrink-0 items-center justify-center border-b border-[#262626] bg-[#313131]">
      <div className="h-[117px] w-[117px] bg-white" />
    </div>
    <div className="flex-1" />
  </div>
);

export default function App() {
  return (
    <div className="flex h-[996px] w-[1920px] flex-col overflow-hidden bg-[#191919] font-['Inter',sans-serif]">
      <TopBar />
      <div className="flex h-[945px] gap-[2px]">
        <div className="flex w-[1365px] flex-col gap-[2px]">
          <div className="flex h-[571px] gap-[2px]">
            <Hierarchy />
            <Scene />
          </div>
          <Project />
        </div>
        <Inspector />
      </div>
      <div className="flex flex-1 items-center justify-end bg-[#191919] pr-[29px]">
        <div className="h-[18px] w-[185px] border-l border-[#2f5f96] bg-[#262626]" />
      </div>
    </div>
  );
}
